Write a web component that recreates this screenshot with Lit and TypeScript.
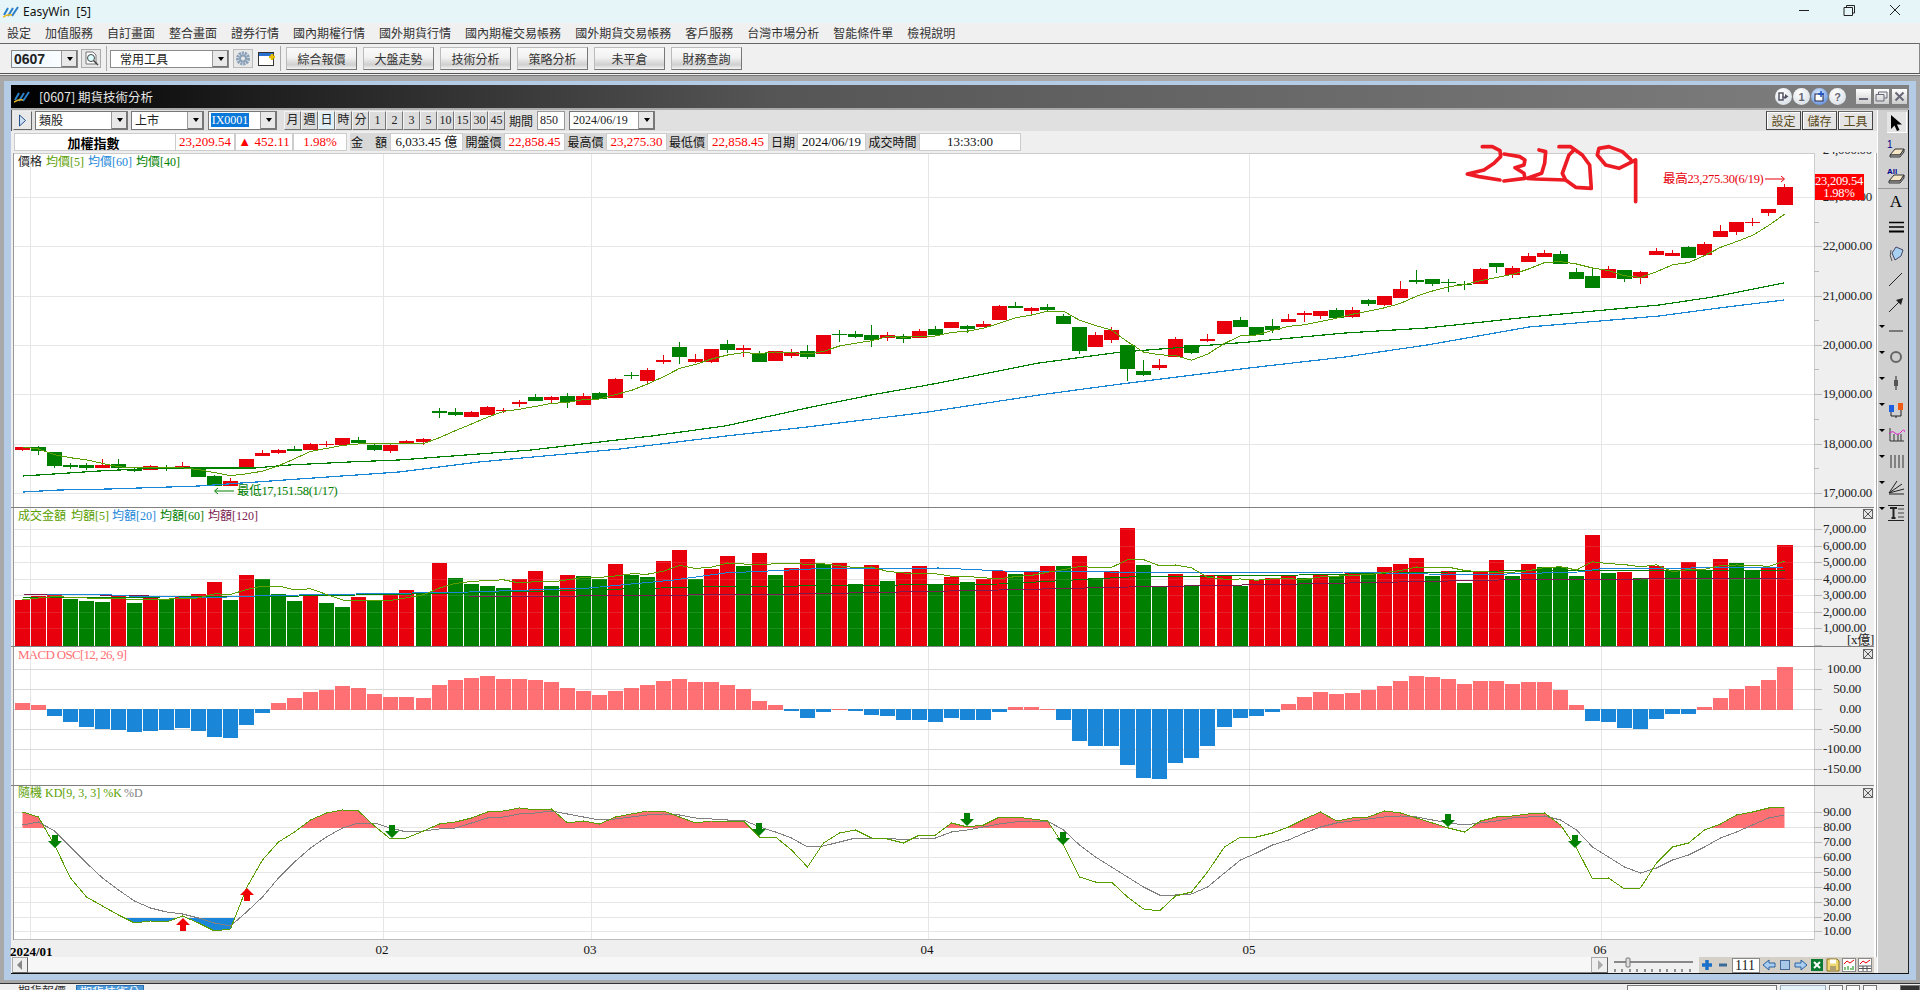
import { LitElement, html, svg, css } from 'lit';
import { customElement } from 'lit/decorators.js';

// candle: body top, body bottom, wick top, wick bottom, 1 = red (page pixels)
const candles: number[][] = [
  [447,450,447,451,1],[447,451,446,455,0],[452,466,452,468,0],[465,467,463,469,0],[465,468,463,470,0],
  [465,468,459,468,1],[464,468,459,469,0],[469,471,468,472,0],[466,470,465,470,1],[467,468,465,471,0],
  [466,468,462,469,1],[467,477,467,477,0],[476,486,475,486,0],[481,486,478,486,1],[459,467,459,468,1],
  [453,456,450,456,1],[450,453,449,454,1],[449,451,446,451,0],[444,450,443,450,1],[444,445,441,447,1],
  [438,445,438,445,1],[440,443,437,444,0],[445,450,444,451,0],[445,451,444,453,1],[441,443,440,444,1],
  [439,442,438,445,1],[411,413,408,418,0],[412,415,408,416,0],[412,417,411,417,1],[407,415,406,415,1],
  [410,411,408,413,1],[402,404,400,407,1],[397,401,394,401,0],[397,400,396,403,1],[396,402,393,408,0],
  [396,405,393,405,1],[393,399,392,399,0],[379,398,378,398,1],[375,376,372,379,0],[370,381,368,383,1],
  [360,362,355,364,1],[347,357,342,364,0],[359,362,354,363,1],[349,362,349,363,1],[344,350,340,353,0],
  [348,350,345,357,1],[353,362,351,362,0],[351,361,351,361,1],[352,356,349,358,1],[351,357,345,359,0],
  [335,354,335,354,1],[334,335,330,342,0],[334,337,331,338,0],[335,340,325,347,0],[335,338,332,341,1],
  [336,339,334,343,0],[331,338,329,338,1],[329,335,326,335,0],[322,328,322,328,1],[326,329,325,333,0],
  [324,327,321,327,1],[306,320,305,320,1],[306,308,302,308,0],[308,311,307,314,1],[307,310,304,312,0],
  [316,324,314,324,0],[327,351,327,354,0],[335,347,332,347,1],[330,340,327,343,1],[345,369,345,381,0],
  [371,375,360,376,0],[365,368,359,370,1],[339,357,337,357,1],[345,353,345,354,0],[339,341,334,342,1],
  [321,334,321,334,1],[320,327,317,327,0],[327,335,327,335,0],[326,330,319,333,0],[319,322,314,322,1],
  [313,315,311,322,1],[311,316,311,319,1],[310,318,308,318,0],[310,317,307,318,1],[300,304,299,306,0],
  [296,305,296,306,1],[289,298,281,298,1],[280,282,270,284,0],[279,284,279,286,0],[282,283,279,292,0],
  [284,285,281,290,0],[269,284,268,284,1],[263,267,263,273,0],[268,275,266,278,1],[256,262,253,262,1],
  [253,257,250,257,1],[254,264,251,264,0],[272,279,268,279,0],[276,288,268,288,0],[269,278,266,278,1],
  [270,279,270,282,0],[272,278,271,284,1],[251,255,248,255,1],[253,256,250,256,1],[247,258,246,258,0],
  [244,255,242,255,1],[231,237,225,237,1],[222,232,222,235,1],[222,223,218,226,1],[209,213,209,216,1],
  [187,205,184,205,1],
];

const volTop = [
  600,596,594,599,601,602,595,603,597,599,597,594,582,600,575,579,594,601,595,603,
  607,597,601,594,590,592,563,578,584,586,588,579,571,586,575,576,579,564,575,577,
  561,550,579,569,556,566,553,575,568,559,564,563,584,565,581,572,566,585,577,582,
  579,571,574,571,566,566,556,578,571,528,565,587,574,585,575,575,586,580,578,575,
  578,574,576,573,573,567,564,558,576,571,583,571,560,576,564,567,567,576,535,573,
  572,578,566,570,562,571,559,563,571,568,545,
];
const volRed = 'RRRGGGRGRGRRRGRGGGRGGRGRRGRGGGGRRGRGGRGGRRGRRGRGRRGRGRGRRGRGRRGRRGRGRRGGRGRRGRRRGRGRGRRRGRGRRGRGGGRGRGRGRGRGGRR';

const macd = [
  703,705,716,722,727,729,730,732,731,730,728,731,737,738,725,713,703,698,692,690,
  686,688,694,697,697,698,685,680,678,676,679,679,680,682,688,691,695,691,688,685,
  681,679,682,682,685,689,701,705,711,718,712,709,711,715,716,720,720,722,718,720,
  720,712,707,707,709,720,741,746,746,765,778,779,763,758,746,727,718,716,712,704,
  697,692,694,693,690,686,681,676,677,679,684,681,681,684,682,682,690,705,721,722,
  728,729,719,714,714,707,698,689,686,680,667,
];

const kLine = [
  812,817,845,878,897,906,915,923,921,922,916,923,931,929,888,860,842,832,820,813,
  810,811,826,839,838,831,824,822,818,812,811,808,810,809,823,821,824,817,814,811,
  811,817,823,821,821,821,837,837,850,867,843,833,830,838,839,843,835,835,823,827,
  825,817,817,819,821,845,877,882,882,897,909,911,896,892,872,847,837,837,833,827,
  819,812,821,818,817,811,813,818,823,828,832,821,817,816,814,813,825,848,879,878,
  889,888,863,847,843,830,824,815,812,808,807,
];
const dLine = [
  825,822,831,847,863,878,890,901,908,912,914,918,923,926,912,897,878,862,848,837,
  828,823,823,828,832,831,829,828,823,818,817,814,813,811,814,817,820,819,817,815,
  814,815,818,819,820,820,827,832,838,847,846,842,838,838,838,840,838,838,832,830,
  827,824,822,821,821,830,845,857,867,877,887,895,895,894,887,873,860,853,845,840,
  833,827,823,821,819,817,816,817,820,823,825,823,821,818,817,816,820,830,847,857,
  867,873,868,860,855,847,838,832,825,818,815,
];

const ma40 = '24,476 100,471 160,468 256,468 290,465 350,462 400,460 480,454 532,450 592,443 653,436 726,426 808,408 872,395 929,385 1040,363 1122,352 1175,348 1250,342 1346,333 1428,328 1530,317 1660,305 1714,297 1785,283';
const ma60 = '24,492 60,490 110,489 200,486 300,479 400,472 480,462 621,449 727,436 808,427 929,412 1040,395 1122,384 1250,368 1346,357 1428,345 1530,327 1660,316 1720,308 1785,300';
const volMa20 = '48,594 96,594 130,596 160,596 200,598 256,596 300,595 470,592 590,588 675,580 726,573 812,569 940,568 1004,571 1111,572 1194,572 1344,572 1472,575 1579,572 1600,569 1784,567';
const volMa60 = '24,598 300,596 470,593 700,587 1000,584 1130,577 1300,575 1500,571 1786,570';
const volMa120 = '24,594 100,595 200,597 470,597 800,594 1000,590 1130,587 1300,584 1500,580 1786,578';

const RED = '#e8000d';
const GREEN = '#008000';
const LIME = '#5a9e00';
const BLUE = '#1a86d8';
const PINK = '#ff7074';
const PLUM = '#7a1a50';

// bars are not quite on a 16px pitch: the last one sits 2px further right
const barX = (i: number) => Math.round(16 + 16.02 * i);
const barW = (i: number) => (i === 110 ? 16 : 15);
const cx = (i: number) => barX(i) + 7.5;
const pts = (ys: number[]) => ys.map((y, i) => `${cx(i)},${y}`).join(' ');
const avg = (a: number[], n: number) =>
  a.map((_, i) => {
    const s = a.slice(Math.max(0, i - n + 1), i + 1);
    return s.reduce((p, v) => p + v, 0) / s.length;
  });

const closes = candles.map((c) => (c[4] ? c[0] : c[1]));
const priceGrid = [197, 246, 296, 345, 394, 444, 493];
const priceMinor = [222, 271, 320, 369, 419, 468];
const volGrid = [529, 546, 562, 579, 595, 612, 628];
const macdGrid = [669, 689, 709, 729, 749, 769];
const kdGrid = [812, 827, 842, 857, 872, 887, 902, 917, 931];
const vGrid = [31, 384, 592, 929, 1250, 1602];

const menus = ['設定','加值服務','自訂畫面','整合畫面','證券行情','國內期權行情','國外期貨行情','國內期權交易帳務','國外期貨交易帳務','客戶服務','台灣市場分析','智能條件單','檢視說明'];
const quick = ['綜合報價','大盤走勢','技術分析','策略分析','未平倉','財務查詢'];
const periods = ['月','週','日','時','分','1','2','3','5','10','15','30','45'];

const logo = html`<svg width="16" height="12" viewBox="0 0 16 12">
  <path d="M1 9 L5 2 M5 10 L10 2 M9 10 L15 1" stroke="#2a7fc8" stroke-width="2" fill="none"/>
  <path d="M0 11 Q5 8 9 9" stroke="#e8b820" stroke-width="1.5" fill="none"/>
</svg>`;

const arrow = (x: number, y: number, down: boolean) => {
  const p = down
    ? `${x - 3},${y} ${x + 3},${y} ${x + 3},${y + 6} ${x + 7},${y + 6} ${x},${y + 13} ${x - 7},${y + 6} ${x - 3},${y + 6}`
    : `${x},${y} ${x + 7},${y + 7} ${x + 3},${y + 7} ${x + 3},${y + 13} ${x - 3},${y + 13} ${x - 3},${y + 7} ${x - 7},${y + 7}`;
  return svg`<polygon points=${p} fill=${down ? GREEN : '#f00000'} />`;
};

const closeBox = (y: number) => svg`
  <rect x="1864.5" y=${y + 0.5} width="9" height="9" fill="#e8e8e8" stroke="#666"/>
  <path d="M1865 ${y + 1} L1873 ${y + 9} M1873 ${y + 1} L1865 ${y + 9}" stroke="#555" fill="none"/>`;

const axisLabels = (rows: [number, string][], right: number) =>
  rows.map(([y, t]) => svg`
    <rect x="1815" y=${y} width="8" height="1" fill="#bbb"/>
    <text class="ax" x=${right} y=${y + 4} text-anchor="end">${t}</text>`);

const gridLines = (ys: number[], fill = '#e6e6e6') =>
  ys.map((y) => svg`<rect x="15" y=${y} width="1800" height="1" fill=${fill}/>`);

const legend = (y: number, items: [number, string, string][]) =>
  items.map(([x, t, c]) => svg`<text class="lg" x=${x} y=${y} fill=${c}>${t}</text>`);

function chart() {
  return html`<svg class="chart" width="1865" height="804" viewBox="12 153 1865 804">
    <defs>
      <clipPath id="pane-top"><rect x="1815" y="152" width="60" height="12"/></clipPath>
      <clipPath id="kd-hi"><rect x="15" y="780" width="1800" height="48"/></clipPath>
      <clipPath id="kd-lo"><rect x="15" y="918" width="1800" height="30"/></clipPath>
    </defs>
    <rect x="12" y="153" width="1865" height="804" fill="#efefef"/>
    <rect x="15" y="153" width="1800" height="786" fill="#fff"/>
    <rect x="1875" y="153" width="2" height="804" fill="#fff"/>
    ${gridLines(priceGrid)}${gridLines(volGrid)}${gridLines(macdGrid)}${gridLines(kdGrid)}
    ${vGrid.map((x) => svg`<rect x=${x} y="153" width="1" height="786" fill="#e6e6e6"/>`)}
    <rect x="15" y="153" width="1800" height="1" fill="#ccc"/>
    <rect x="15" y="939" width="1800" height="1" fill="#bbb"/>
    <rect x="1815" y="153" width="1" height="787" fill="#ccc"/>
    <rect x="14" y="153" width="1" height="787" fill="#999"/>

    <!-- price -->
    ${candles.map((c, i) => {
      const f = c[4] ? RED : GREEN;
      return svg`<rect x=${barX(i) + 7} y=${c[2]} width="1" height=${c[3] - c[2]} fill=${f}/>
        <rect x=${barX(i)} y=${c[0]} width=${barW(i)} height=${c[1] - c[0]} fill=${f}/>`;
    })}
    <g fill="none" shape-rendering="crispEdges" stroke-width="1.2">
      <polyline points=${ma60} stroke=${BLUE}/>
      <polyline points=${ma40} stroke=${GREEN}/>
      <polyline points=${pts(avg(closes, 5))} stroke=${LIME} stroke-width="1"/>
    </g>
    ${legend(166, [[19, '價格', '#222'], [47, '均價[5]', LIME], [89, '均價[60]', BLUE], [137, '均價[40]', GREEN]])}
    <text class="note" x="238" y="495" fill=${GREEN}>最低17,151.58(1/17)</text>
    <path d="M216 491 H235 M219 488 L215.500 491 L219 494" fill="none" stroke=${GREEN}/>
    <text class="note" x="1664" y="183" fill=${RED}>最高23,275.30(6/19)</text>
    <path d="M1766 179 H1785 M1782 176 L1785.500 179 L1782 182" fill="none" stroke=${RED}/>
    <text class="ax" x="1873" y="154" text-anchor="end" clip-path="url(#pane-top)">24,000.00</text>
    ${axisLabels([[197, '23,000.00'], [246, '22,000.00'], [296, '21,000.00'], [345, '20,000.00'], [394, '19,000.00'], [444, '18,000.00'], [493, '17,000.00']], 1873)}
    ${priceMinor.map((y) => svg`<rect x="1815" y=${y} width="5" height="1" fill="#bbb"/>`)}
    <rect x="1816" y="174" width="49" height="26" fill="#f00"/>
    <text class="tag" x="1840" y="185" text-anchor="middle">23,209.54</text>
    <text class="tag" x="1840" y="197" text-anchor="middle">1.98%</text>
    <g transform="translate(1400 0) scale(.3333)" fill="none" stroke="#ed1c24" stroke-width="11" stroke-linejoin="round" stroke-linecap="round">
      <path d="M250 440 L280 440 L303 452 L305 470 L285 490 L255 510 L205 522 L240 530 L303 540"/>
      <path d="M315 462 L362 470 L378 480 L375 495 L348 503 L375 520 L378 535 L315 543"/>
      <path d="M420 450 L440 455 L437 490 L428 520 L385 535 L410 537 L500 540"/>
      <path d="M480 440 L515 440 L550 465 L572 495 L577 565 L530 562 L500 540 L490 520 L510 465 L525 450"/>
      <path d="M695 478 L670 455 L630 440 L600 445 L595 465 L620 495 L660 505 L690 490 L710 480 L710 605"/>
    </g>

    <!-- volume -->
    ${volTop.map((y, i) => svg`<rect x=${barX(i)} y=${y} width=${barW(i)} height=${646 - y} fill=${volRed[i] === 'R' ? RED : GREEN}/>`)}
    ${gridLines(volGrid, 'rgba(230,230,230,.14)')}
    <g fill="none" shape-rendering="crispEdges">
      <polyline points=${volMa120} stroke=${PLUM}/>
      <polyline points=${volMa60} stroke=${GREEN}/>
      <polyline points=${volMa20} stroke=${BLUE}/>
      <polyline points=${pts(avg(volTop, 5))} stroke=${LIME}/>
    </g>
    ${legend(520, [[19, '成交金額', LIME], [72, '均額[5]', LIME], [113, '均額[20]', BLUE], [161, '均額[60]', GREEN], [209, '均額[120]', PLUM]])}
    ${axisLabels([[529, '7,000.00'], [546, '6,000.00'], [562, '5,000.00'], [579, '4,000.00'], [595, '3,000.00'], [612, '2,000.00'], [628, '1,000.00']], 1867)}
    <rect x="1815" y="645" width="8" height="1" fill="#bbb"/>
    <text class="ax" x="1875" y="644" text-anchor="end">[x億]</text>

    <!-- macd -->
    ${macd.map((y, i) =>
      y < 709.5
        ? svg`<rect x=${barX(i)} y=${y} width=${barW(i)} height=${710 - y} fill=${PINK}/>`
        : svg`<rect x=${barX(i)} y="709" width=${barW(i)} height=${y - 709} fill=${BLUE}/>`)}
    ${gridLines(macdGrid, 'rgba(120,120,120,.1)')}
    <text class="macd" x="19" y="659" fill=${PINK}>MACD OSC[12, 26, 9]</text>
    ${axisLabels([[669, '100.00'], [689, '50.00'], [709, '0.00'], [729, '-50.00'], [749, '-100.00'], [769, '-150.00']], 1862)}

    <!-- kd -->
    <polygon clip-path="url(#kd-hi)" fill=${PINK} points="${pts(kLine)} ${cx(110)},828 ${cx(0)},828"/>
    <polygon clip-path="url(#kd-lo)" fill=${BLUE} points="${pts(kLine)} ${cx(110)},918 ${cx(0)},918"/>
    <g fill="none" shape-rendering="crispEdges">
      <polyline points=${pts(dLine)} stroke="#808080"/>
      <polyline points=${pts(kLine)} stroke=${LIME}/>
    </g>
    ${arrow(56, 835, true)}${arrow(393, 825, true)}${arrow(760, 823, true)}${arrow(968, 813, true)}
    ${arrow(1064, 832, true)}${arrow(1449, 814, true)}${arrow(1576, 835, true)}
    ${arrow(184, 918, false)}${arrow(248, 888, false)}
    ${legend(797, [[19, '隨機 KD[9, 3, 3] %K', LIME], [125, '%D', '#808080']])}
    ${axisLabels([[812, '90.00'], [827, '80.00'], [842, '70.00'], [857, '60.00'], [872, '50.00'], [887, '40.00'], [902, '30.00'], [917, '20.00'], [931, '10.00']], 1852)}

    <rect x="12" y="507" width="1863" height="1" fill="#808080"/>
    <rect x="12" y="646" width="1863" height="1" fill="#808080"/>
    <rect x="12" y="785" width="1863" height="1" fill="#808080"/>
    ${closeBox(509)}${closeBox(649)}${closeBox(788)}

    <text class="date bold" x="11" y="956">2024/01</text>
    ${[['02', 383], ['03', 591], ['04', 928], ['05', 1250], ['06', 1601]].map(
      ([t, x]) => svg`<text class="date" x=${x} y="954" text-anchor="middle">${t}</text>`)}
  </svg>`;
}

const toolIcons = [
  svg`<path d="M4 1 V15 L7.500 11.500 L10 17 L12.500 16 L10 10.500 L15 10.500 Z" fill="#000"/>`,
  svg`<text x="0" y="8" font-size="10" fill="#00008b" font-family="Liberation Sans">1</text><path d="M3 15 L8 9 H17 L13 15 Z" fill="#f5e6c8" stroke="#333"/><path d="M13 15 L17 9 V12 L13 17 H3 V15 Z" fill="#bbb" stroke="#333"/>`,
  svg`<text x="0" y="8" font-size="8" fill="#00008b" font-family="Liberation Sans" font-weight="700">All</text><path d="M2 15 L7 9 H17 L13 15 Z" fill="#f5e6c8" stroke="#333"/><path d="M13 15 L17 9 V12 L13 17 H2 V15 Z" fill="#bbb" stroke="#333"/>`,
  svg`<text x="9" y="15" font-size="17" text-anchor="middle" fill="#000" font-family="Liberation Serif">A</text>`,
  svg`<path d="M2 4.500 H17 M2 9 H17" stroke="#000" stroke-width="1.500"/><path d="M2 13.500 H17" stroke="#000" stroke-width="2"/>`,
  svg`<path d="M5 9 L9 3 L16 6 L14 12 L8 16 Z" fill="#a8d0f0" stroke="#446"/><path d="M4 6 Q2 12 5 17" fill="none" stroke="#555"/>`,
  svg`<path d="M2 16 L15 3" stroke="#222"/>`,
  svg`<path d="M2 16 L15 3" stroke="#222"/><path d="M9 4 L16 2 L14 9 Z" fill="#222"/>`,
  svg`<path d="M2 9 H16" stroke="#222"/>`,
  svg`<circle cx="9" cy="9" r="5" fill="none" stroke="#666" stroke-width="2"/>`,
  svg`<path d="M9 2 V16" stroke="#222"/><rect x="7" y="6" width="4" height="6" fill="#555"/>`,
  svg`<rect x="2" y="5" width="5" height="7" fill="#1c5fe0"/><rect x="11" y="3" width="5" height="7" fill="#f05a14"/><path d="M4 12 V16 H14 V10 M9 16 V18" fill="none" stroke="#222"/>`,
  svg`<path d="M3 2 V15 H17 M7 8 V15 M11 8 V15 M14 8 V15" fill="none" stroke="#333"/><path d="M2 8 Q5 4 8 7 T14 6 T18 6" fill="none" stroke="#e020d0"/>`,
  svg`<path d="M4 3 V16 M8 3 V16 M12 3 V16 M16 3 V16" stroke="#333"/>`,
  svg`<path d="M2 15 L10 3 M2 15 L15 6 M2 15 L17 11 M2 16 H17" stroke="#222" fill="none"/>`,
  svg`<path d="M1 1.500 H17 M1 16.500 H17" stroke="#222"/><path d="M3 4 H10 M6.500 4 V14 M4.500 14 H8.500" stroke="#222" stroke-width="2" fill="none"/><path d="M11 5 H17 M11 9 H17 M11 13 H17" stroke="#444"/>`,
];

@customElement('app-root')
export class AppRoot extends LitElement {
  static styles = css`
    :host {
      display: block;
      width: 1920px;
      height: 990px;
      overflow: hidden;
      font-family: "Noto Sans CJK TC", "Liberation Sans", sans-serif;
      font-size: 12px;
      color: #222;
      background: #f0f0f0;
    }
    .app { display: flex; flex-direction: column; height: 990px; }

    .titlebar {
      height: 23px;
      background: #e6f5f7;
      display: flex;
      align-items: center;
      padding: 0 0 0 3px;
      gap: 4px;
    }
    .app-name { font-family: "Noto Sans", sans-serif; font-size: 12px; white-space: pre; color: #111; }
    .win-ctl { margin-left: auto; display: flex; }
    .win-ctl svg { display: block; }

    .menubar {
      height: 20px;
      box-sizing: border-box;
      padding: 0 0 1px 7px;
      display: flex;
      gap: 14px;
      align-items: center;
      color: #333;
    }

    .toolbar {
      height: 29px;
      border-top: 1px solid #666;
      display: flex;
      align-items: center;
      padding-left: 11px;
      border-right: 1px solid #888;
    }
    .combo {
      height: 18px;
      display: flex;
      background: #fff;
      border: 1px solid #8a8a8a;
      box-sizing: border-box;
      align-items: center;
      flex: none;
    }
    .combo span { flex: 1; padding-left: 3px; line-height: 16px; overflow: hidden; white-space: nowrap; }
    .dd {
      width: 15px;
      height: 100%;
      flex: none;
      background: #e8e8e8;
      border-left: 1px solid #999;
      box-shadow: inset -1px -1px 0 #777;
      display: flex;
      align-items: center;
      justify-content: center;
    }
    .dd::after {
      content: "";
      border-left: 3.5px solid transparent;
      border-right: 3.5px solid transparent;
      border-top: 4px solid #000;
    }
    .code { width: 67px; margin-right: 3px; background: linear-gradient(90deg, #eaf6ff, #fff); }
    .code span { font: 700 14px "Liberation Sans", sans-serif; padding-left: 2px; }
    .tool-sel { width: 119px; margin-left: 9px; }
    .tool-sel span { padding-left: 9px; font-size: 12px; }
    .ico { width: 20px; height: 19px; display: block; flex: none; }
    .sep { width: 1px; height: 25px; background: #aaa; flex: none; }
    .qbtn {
      width: 71px;
      height: 23px;
      margin-right: 6px;
      box-sizing: border-box;
      border: 1px solid #bbb;
      border-bottom-color: #777;
      border-right-color: #777;
      background: linear-gradient(#fafafa, #f2f2f2 45%, #cfcfcf 80%, #f4f4f4);
      display: flex;
      align-items: center;
      justify-content: center;
      color: #333;
      flex: none;
    }

    .mdi {
      flex: 1;
      min-height: 0;
      padding: 7px 4px 3px 4px;
      background: #a8a8a8;
      border-top: 1px solid #555;
      border-bottom: 1px solid #333;
      box-shadow: inset 0 1px 0 #eee, inset 0 2px 0 #777;
      display: flex;
    }
    .win {
      flex: 1;
      border: solid #b4cbe6;
      border-width: 4px 7px 6px 7px;
      display: flex;
      flex-direction: column;
      min-height: 0;
    }
    .win-title {
      height: 23px;
      flex: none;
      background: linear-gradient(90deg, #000 0, #1c1c1c 12%, #555 40%, #808080 100%);
      border-bottom: 2px solid #aaa;
      display: flex;
      align-items: center;
      color: #e8e8e8;
      padding-left: 3px;
    }
    .win-title .name { margin-left: 9px; font-size: 12.500px; }
    .win-btns { margin-left: auto; display: flex; align-items: center; padding-right: 2px; }
    .round {
      width: 17px;
      height: 17px;
      border-radius: 50%;
      background: radial-gradient(circle at 40% 30%, #fff, #cfd8e0);
      margin-right: 1px;
      display: flex;
      align-items: center;
      justify-content: center;
      font: 700 11px "Liberation Sans", sans-serif;
      color: #667;
    }
    .round.blue { background: radial-gradient(circle at 40% 30%, #d8e8ff, #4a80d8); }
    .sq {
      width: 15px;
      height: 15px;
      background: linear-gradient(#fff, #ccc);
      margin-left: 3px;
      display: flex;
      align-items: center;
      justify-content: center;
    }
    .round + .sq { margin-left: 9px; }

    .win-body { flex: 1; min-height: 0; display: flex; border-right: 1px solid #222; border-bottom: 1px solid #111; }
    .main { width: 1866px; flex: none; display: flex; flex-direction: column; }

    .ctrl {
      height: 22px;
      background: #e0e0e0;
      display: flex;
      align-items: center;
      padding: 0 4px 0 1px;
      border-left: 1px solid #555;
      box-sizing: border-box;
    }
    .play {
      width: 19px;
      height: 19px;
      box-sizing: border-box;
      background: #e8e8e8;
      border: 1px solid #666;
      border-top-color: #eee;
      border-left-color: #eee;
      margin-right: 3px;
      display: flex;
      align-items: center;
      justify-content: center;
      flex: none;
    }
    .ctrl .combo { height: 19px; border-color: #777; margin-right: 3px; }
    .w93 { width: 93px; }
    .w73 { width: 73px; }
    .w69 { width: 69px; margin-left: 1px; margin-right: 7px !important; background: #fff; }
    .w69 i {
      font: 12px "Liberation Serif", serif;
      background: #0a78d8;
      color: #fff;
      display: block;
      line-height: 14px;
      margin-left: 2px;
      width: 38px;
      text-align: center;
      flex: none;
    }
    .w69 span { padding-left: 1px; }
    .pbtn {
      width: 17px;
      height: 19px;
      box-sizing: border-box;
      background: #dcdcdc;
      border: 1px solid #777;
      border-top-color: #f4f4f4;
      border-left-color: #f4f4f4;
      text-align: center;
      font: 12px/17px "Liberation Serif", "Noto Sans CJK TC", serif;
      flex: none;
    }
    .pbtn.on { background: #dff0f6; }
    .plabel { margin: 0 4px; width: 24px; white-space: nowrap; flex: none; }
    .field {
      height: 19px;
      background: #fff;
      border: 1px solid #999;
      box-sizing: border-box;
      font: 12px/17px "Liberation Serif", serif;
      padding-left: 2px;
      flex: none;
    }
    .w28 { width: 28px; margin-right: 4px; }
    .date-sel { width: 86px; font: 12px "Liberation Serif", serif; }
    .spacer { flex: 1; }
    .rbtn {
      width: 35px;
      height: 19px;
      margin-left: 1px;
      box-sizing: border-box;
      background: #e4e4e4;
      border: 1px solid #444;
      border-top-color: #666;
      box-shadow: inset 1px 1px 0 #fff;
      text-align: center;
      line-height: 17px;
      color: #5a4a20;
    }

    .info {
      height: 23px;
      box-sizing: border-box;
      padding: 2px 0 0 3px;
      background: #efefef;
      display: grid;
      grid-template-columns: 161px 60px 58px 54px 3px 40px 73px 41px 61px 41px 61px 40px 62px 28px 69px 53px 102px;
      grid-template-rows: 18px;
    }
    .cell {
      font: 13px/16px "Liberation Serif", "Noto Sans CJK TC", serif;
      background: #fff;
      border: 1px solid #ccc;
      box-sizing: border-box;
      text-align: center;
      white-space: nowrap;
      overflow: hidden;
      color: #111;
    }
    .cell.red { color: #f00; }
    .cell.name { font: 700 13px/17px "Noto Sans CJK TC", sans-serif; color: #000; border-right: 0; padding-right: 3px; }
    .cell.lab {
      background: #d8d8d8;
      border: 0;
      font: 12px/18px "Noto Sans CJK TC", sans-serif;
    }
    .cell.wide-lab { display: flex; justify-content: space-between; padding: 0 3px 0 1px; }
    .blank { background: transparent; }

    .chart { display: block; overflow: visible; flex: none; }
    .ax { font: 13px "Liberation Serif", "Noto Sans CJK TC", serif; letter-spacing: -.3px; fill: #222; }
    .lg { font: 12px "Liberation Serif", "Noto Sans CJK TC", serif; }
    .macd { font: 13px "Liberation Serif", serif; letter-spacing: -.7px; }
    .note { font: 12.500px "Liberation Serif", "Noto Sans CJK TC", serif; letter-spacing: -.3px; }
    .tag { font: 12.500px "Liberation Serif", serif; fill: #fff; letter-spacing: -.2px; }
    .date { font: 13px "Liberation Serif", serif; fill: #111; }
    .date.bold { font-weight: 700; fill: #000; }

    .scroll { height: 16px; display: flex; background: #f0f0f0; flex: none; padding-left: 1px; }
    .sbtn {
      width: 17px;
      height: 16px;
      box-sizing: border-box;
      flex: none;
      background: #efefef;
      border: 1px solid #aaa;
      border-right-color: #666;
      border-bottom-color: #666;
      display: flex;
      align-items: center;
      justify-content: center;
    }
    .sbtn.left { width: 16px; }
    .track { width: 1563px; flex: none; background: #f7f7f7; border-bottom: 1px solid #888; box-sizing: border-box; }
    .slider { width: 91px; flex: none; display: block; }
    .ctls {
      width: 175px;
      flex: none;
      background: #d4d0c8;
      display: flex;
      align-items: center;
      height: 16px;
    }
    .ctls svg { width: 16px; height: 16px; display: block; flex: none; }
    .num {
      width: 28px;
      height: 15px;
      background: #fff;
      box-sizing: border-box;
      border: 1px solid #888;
      margin: 0 1px;
      font: 14px/14px "Liberation Serif", serif;
      padding-left: 2px;
      flex: none;
    }

    .tools {
      flex: 1;
      background: #d0d0d0;
      display: flex;
      flex-direction: column;
      border-left: 1px solid #fff;
    }
    .tool { height: 26px; flex: none; display: flex; align-items: center; padding-left: 9px; position: relative; }
    .tool svg { width: 18px; height: 18px; display: block; }
    .tool.on::before {
      content: "";
      position: absolute;
      left: 9px;
      top: 2px;
      width: 19px;
      height: 20px;
      background: #e4e4e4;
      border-right: 1px solid #fff;
      border-bottom: 1px solid #fff;
    }
    .tool.on svg { position: relative; }
    .tool.rule { box-shadow: 0 1px 0 #999; }
    .tool .tri {
      position: absolute;
      left: 1px;
      top: 7px;
      border-left: 3px solid transparent;
      border-right: 3px solid transparent;
      border-top: 3px solid #000;
    }

    .tabs {
      height: 6px;
      flex: none;
      background: #f0f0f0;
      display: flex;
      align-items: flex-start;
      padding-top: 1px;
      overflow: hidden;
      font-size: 12px;
      line-height: 12px;
      box-sizing: border-box;
    }
    .tab { width: 68px; height: 12px; text-align: center; flex: none; color: #333; }
    .tab.first { margin-left: 8px; }
    .tab.cur { background: #4f9ad8; color: #fff; border: 1px solid #2a70b0; box-sizing: border-box; }
    .status { margin-left: auto; display: flex; gap: 3px; }
    .status i { display: block; height: 12px; border: 1px solid #777; box-sizing: border-box; background: #fafafa; }
    .s150 { width: 150px; }
    .s46 { width: 46px; border-color: #9ab !important; background: #e6f2fa !important; }
    .s14 { width: 14px; }
    .s20 { width: 20px; background: #333 !important; margin-left: 20px; }
  `;

  render() {
    return html`<div class="app">
      <div class="titlebar">
        ${logo}<span class="app-name">EasyWin  [5]</span>
        <div class="win-ctl">
          <svg width="135" height="23" viewBox="0 0 135 23" fill="none" stroke="#222">
            <path d="M14 10.500 H24"/>
            <path d="M59 7.500 H67.500 V15.500 H59 Z M61.500 7 V5.500 H69.500 V13 H68"/>
            <path d="M105 5 L115 15 M115 5 L105 15"/>
          </svg>
        </div>
      </div>
      <div class="menubar">${menus.map((m) => html`<span>${m}</span>`)}</div>
      <div class="toolbar">
        <div class="combo code"><span>0607</span><div class="dd"></div></div>
        <svg class="ico" viewBox="0 0 20 19">
          <rect x=".5" y=".5" width="19" height="18" fill="#e8e8e8" stroke="#aaa"/>
          <path d="M5 3 H12 L15 6 V15 H5 Z" fill="#fff" stroke="#777"/>
          <circle cx="10" cy="9" r="3.500" fill="#dff" stroke="#444"/>
          <path d="M12.500 11.500 L17 16" stroke="#444" stroke-width="1.500"/>
        </svg>
        <div class="sep" style="margin-left:5px"></div>
        <div class="combo tool-sel" style="margin-left:3px"><span>常用工具</span><div class="dd"></div></div>
        <svg class="ico" style="margin-left:4px" viewBox="0 0 20 19">
          <rect x=".5" y=".5" width="19" height="18" fill="#e8e8e8" stroke="#bbb"/>
          <circle cx="10" cy="9.500" r="5.500" fill="none" stroke="#8aa0b8" stroke-width="3" stroke-dasharray="2.200 .8"/>
          <circle cx="10" cy="9.500" r="3" fill="none" stroke="#8aa0b8" stroke-width="2"/>
        </svg>
        <svg class="ico" style="margin-left:3px;width:21px" viewBox="0 0 21 19">
          <rect x="2.500" y="3.500" width="15" height="13" fill="#fff" stroke="#333"/>
          <rect x="3" y="4" width="14" height="3" fill="#2a70d0"/>
          <path d="M16 5 V11 M13 8 H19" stroke="#e8c000" stroke-width="2.500"/>
        </svg>
        <div class="sep" style="margin:0 5px 0 3px"></div>
        ${quick.map((q) => html`<div class="qbtn">${q}</div>`)}
      </div>
      <div class="mdi">
        <div class="win">
          <div class="win-title">
            ${logo}<span class="name">[0607] 期貨技術分析</span>
            <div class="win-btns">
              <div class="round"><svg width="11" height="11" viewBox="0 0 11 11"><path d="M1 2 H5 V9 H1 Z" fill="none" stroke="#556" stroke-width="1.500"/><path d="M4 5.500 H7 V3 L10.500 5.500 L7 8 Z" fill="#556"/></svg></div>
              <div class="round">1</div>
              <div class="round blue"><svg width="11" height="11" viewBox="0 0 11 11"><rect x="1" y="3" width="8" height="7" fill="#fff" stroke="#224"/><path d="M7 0 V6 M4 3 H10" stroke="#1a50c0" stroke-width="1.500"/></svg></div>
              <div class="round">?</div>
              <div class="sq"><svg width="11" height="11" viewBox="0 0 11 11"><rect x="1" y="7" width="9" height="2" fill="#667"/></svg></div>
              <div class="sq"><svg width="13" height="11" viewBox="0 0 13 11" fill="none" stroke="#667"><path d="M1 3.500 H9 V10 H1 Z M3.500 3 V1 H12 V7 H9.500"/></svg></div>
              <div class="sq"><svg width="11" height="11" viewBox="0 0 11 11"><path d="M1.500 1.500 L9.500 9.500 M9.500 1.500 L1.500 9.500" stroke="#667" stroke-width="2"/></svg></div>
            </div>
          </div>
          <div class="win-body">
            <div class="main">
              <div class="ctrl">
                <div class="play"><svg width="9" height="13" viewBox="0 0 9 13"><path d="M1.500 1 L7.500 6.500 L1.500 12 Z" fill="#cfe0f4" stroke="#24508c"/></svg></div>
                <div class="combo w93"><span>類股</span><div class="dd"></div></div>
                <div class="combo w73"><span>上市</span><div class="dd"></div></div>
                <div class="combo w69"><i>IX0001</i><span></span><div class="dd"></div></div>
                ${periods.map((p) => html`<div class="pbtn ${p === '日' ? 'on' : ''}">${p}</div>`)}
                <div class="plabel">期間</div>
                <div class="field w28">850</div>
                <div class="combo date-sel"><span>2024/06/19</span><div class="dd"></div></div>
                <div class="spacer"></div>
                <div class="rbtn">設定</div><div class="rbtn">儲存</div><div class="rbtn">工具</div>
              </div>
              <div class="info">
                <div class="cell name">加權指數</div>
                <div class="cell red">23,209.54</div>
                <div class="cell red">▲ 452.11</div>
                <div class="cell red">1.98%</div>
                <div class="blank"></div>
                <div class="cell lab wide-lab"><span>金</span><span>額</span></div>
                <div class="cell">6,033.45 億</div>
                <div class="cell lab">開盤價</div>
                <div class="cell red">22,858.45</div>
                <div class="cell lab">最高價</div>
                <div class="cell red">23,275.30</div>
                <div class="cell lab">最低價</div>
                <div class="cell red">22,858.45</div>
                <div class="cell lab">日期</div>
                <div class="cell">2024/06/19</div>
                <div class="cell lab">成交時間</div>
                <div class="cell">13:33:00</div>
              </div>
              ${chart()}
              <div class="scroll">
                <div class="sbtn left"><svg width="8" height="10" viewBox="0 0 8 10"><path d="M6 0 L1 5 L6 10 Z" fill="#888"/></svg></div>
                <div class="track"></div>
                <div class="sbtn"><svg width="8" height="10" viewBox="0 0 8 10"><path d="M2 0 L7 5 L2 10 Z" fill="#aaa"/></svg></div>
                <svg class="slider" viewBox="0 0 91 16" height="16">
                  <rect x="6" y="4" width="79" height="2" fill="#888"/>
                  <rect x="18" y="1" width="4" height="9" rx="1" fill="#ddd" stroke="#777"/>
                  <path d="M7 12 V15 M14 12 V15 M22 12 V15 M29 12 V15 M37 12 V15 M44 12 V15 M52 12 V15 M59 12 V15 M67 12 V15 M74 12 V15 M82 12 V15" stroke="#333"/>
                </svg>
                <div class="ctls">
                  <svg viewBox="0 0 16 16"><path d="M8 3 V13 M3 8 H13" stroke="#1a70c8" stroke-width="3.500"/></svg>
                  <svg viewBox="0 0 16 16"><path d="M4 8 H12" stroke="#3a6a98" stroke-width="3"/></svg>
                  <div class="num">111</div>
                  <svg viewBox="0 0 16 16"><path d="M2 8 L8 3 V6 H14 V10 H8 V13 Z" fill="#a8cdf0" stroke="#2a60a0"/></svg>
                  <svg viewBox="0 0 16 16"><rect x="3.500" y="3.500" width="9" height="9" fill="#a8c8e8" stroke="#4a6a98"/></svg>
                  <svg viewBox="0 0 16 16"><path d="M14 8 L8 3 V6 H2 V10 H8 V13 Z" fill="#a8cdf0" stroke="#2a60a0"/></svg>
                  <svg viewBox="0 0 16 16"><rect x="2" y="2" width="12" height="12" fill="#0a7a30"/><path d="M5 5 L11 11 M11 5 L5 11" stroke="#fff" stroke-width="2"/></svg>
                  <svg viewBox="0 0 16 16"><path d="M2 2 H12 L14 4 V14 H2 Z" fill="#f0d870" stroke="#8a7020"/><rect x="5" y="2.500" width="6" height="4" fill="#fff"/><rect x="5" y="9" width="6" height="5" fill="#b0a070"/></svg>
                  <svg viewBox="0 0 16 16"><rect x="1.500" y="1.500" width="13" height="13" fill="#fff" stroke="#888"/><path d="M3 7 L6 4 L9 6 L13 3" fill="none" stroke="#e00"/><path d="M4 13 V10 M7 13 V9 M10 13 V11 M12 13 V9" stroke="#080"/></svg>
                  <svg viewBox="0 0 16 16"><rect x="1.500" y="1.500" width="13" height="13" fill="#fff" stroke="#888"/><path d="M3 7 L6 4 L9 6 L13 3" fill="none" stroke="#e00"/><path d="M2 9 H14 M2 11.500 H14 M6 9 V14 M10 9 V14" stroke="#555"/></svg>
                </div>
              </div>
            </div>
            <div class="tools">
              ${toolIcons.map((ic, i) => html`<div class="tool ${i === 0 ? 'on' : ''} ${i === 2 ? 'rule' : ''}">
                ${i >= 8 ? html`<i class="tri"></i>` : ''}
                <svg viewBox="0 0 18 18">${ic}</svg>
              </div>`)}
            </div>
          </div>
        </div>
      </div>
      <div class="tabs">
        <div class="tab first">期貨報價</div>
        <div class="tab cur">期貨技術分析</div>
        <div class="status">
          <i class="s150"></i><i class="s46"></i><i class="s14"></i><i class="s14"></i><i class="s14"></i><i class="s20"></i>
        </div>
      </div>
    </div>`;
  }
}
